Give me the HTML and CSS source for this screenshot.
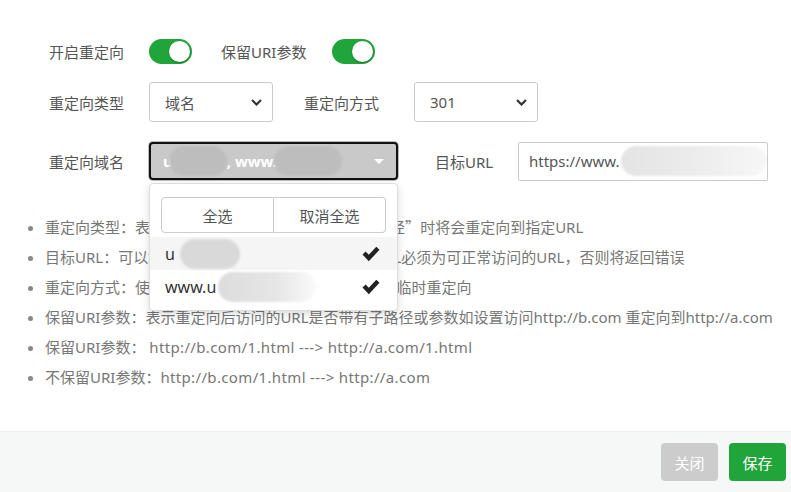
FILE: index.html
```html
<!DOCTYPE html>
<html lang="zh-CN">
<head>
  <meta charset="UTF-8" />
  <meta name="viewport" content="width=device-width, initial-scale=1.0" />
  <title>重定向</title>
  <link rel="stylesheet" href="styles.css">
</head>
<body>
  <div class="dialog">
    <div class="content">
      <div class="row">
        <span class="label">开启重定向</span>
        <span class="switch"></span>
        <span class="label label-keep">保留URI参数</span>
        <span class="switch"></span>
      </div>

      <div class="row">
        <span class="label">重定向类型</span>
        <div class="select">
          <span>域名</span>
          <svg width="11" height="7" viewBox="0 0 11 7"><polyline points="1,1 5.5,5.5 10,1" fill="none" stroke="#333" stroke-width="2.2"/></svg>
        </div>
        <span class="label label-mode">重定向方式</span>
        <div class="select">
          <span>301</span>
          <svg width="11" height="7" viewBox="0 0 11 7"><polyline points="1,1 5.5,5.5 10,1" fill="none" stroke="#333" stroke-width="2.2"/></svg>
        </div>
      </div>

      <div class="row row-domain">
        <span class="label">重定向域名</span>
        <div class="domain">
          <div class="domain-select">
            <span>u</span><span class="blot blot-a"></span><span>, www.</span><span class="blot blot-b"></span>
            <span class="caret"></span>
          </div>
          <div class="menu">
            <div class="menu-actions">
              <button>全选</button>
              <button>取消全选</button>
            </div>
            <div class="menu-item active">
              <span>u</span><span class="blot blot-c"></span>
              <svg class="check" width="18" height="16" viewBox="0 0 18 16"><path d="M0.5 8.6 L3.6 5.6 L6.8 8.8 L14.3 0.8 L17.5 3.8 L6.8 15.2 Z" fill="#222"/></svg>
            </div>
            <div class="menu-item">
              <span>www.u</span><span class="blot blot-d"></span>
              <svg class="check" width="18" height="16" viewBox="0 0 18 16"><path d="M0.5 8.6 L3.6 5.6 L6.8 8.8 L14.3 0.8 L17.5 3.8 L6.8 15.2 Z" fill="#222"/></svg>
            </div>
          </div>
        </div>
        <span class="label label-url">目标URL</span>
        <div class="input">https://www.<span class="blot blot-e"></span></div>
      </div>

      <ul class="tips">
        <li>重定向类型：表示访问选择的<span class="cjk">“</span>域名<span class="cjk">”</span>或输入的<span class="cjk">“</span>路径<span class="cjk">”</span>时将会重定向到指定URL</li>
        <li>目标URL：可以填写你需要重定向到的站点，目标URL必须为可正常访问的URL，否则将返回错误</li>
        <li>重定向方式：使用301表示永久重定向，使用302表示临时重定向</li>
        <li>保留URI参数：表示重定向后访问的URL是否带有子路径或参数如设置访问http://b.com 重定向到http://a.com</li>
        <li>保留URI参数： <span class="url">http://b.com/1.html ---&gt; http://a.com/1.html</span></li>
        <li>不保留URI参数：<span class="url">http://b.com/1.html ---&gt; http://a.com</span></li>
      </ul>
    </div>

    <div class="footer">
      <button class="btn btn-close">关闭</button>
      <button class="btn btn-save">保存</button>
    </div>
  </div>
</body>
</html>
```

FILE: styles.css
```css
body {
  margin: 0;
  font-family: "Noto Sans", "Noto Sans CJK SC", sans-serif;
  font-size: 15px;
  color: #555;
  background: #fff;
}

.dialog {
  height: 100vh;
  display: flex;
  flex-direction: column;
}

.content {
  flex: 1;
  padding: 31px 0 0 49px;
}

.row {
  display: flex;
  align-items: center;
  height: 40px;
  margin-bottom: 11px;
}

.row-domain {
  margin-top: 19px;
}

.label {
  width: 100px;
  flex-shrink: 0;
  color: #555;
}

.label-keep {
  width: 111px;
  margin-left: 29px;
}

.label-mode {
  width: 110px;
  margin-left: 31px;
}

.label-url {
  width: 83px;
  margin-left: 37px;
}

.switch {
  position: relative;
  width: 43px;
  height: 25px;
  border-radius: 13px;
  background: #20a53a;
  flex-shrink: 0;
}

.switch::after {
  content: "";
  position: absolute;
  right: 2px;
  top: 2px;
  width: 21px;
  height: 21px;
  border-radius: 50%;
  background: #fff;
  box-shadow: 0 1px 2px rgba(0,0,0,0.3);
}

.select {
  box-sizing: border-box;
  width: 124px;
  height: 40px;
  border: 1px solid #ccc;
  border-radius: 3px;
  padding: 0 10px 0 15px;
  display: flex;
  align-items: center;
  justify-content: space-between;
  color: #555;
}

.domain {
  position: relative;
  width: 249px;
  flex-shrink: 0;
}

.domain-select {
  box-sizing: border-box;
  height: 38px;
  border: 2px solid #111;
  border-radius: 4px;
  box-shadow: 0 0 0 1px #bbb;
  background: #c9c9c9;
  color: #fff;
  font-weight: bold;
  padding: 0 12px;
  display: flex;
  align-items: center;
  white-space: nowrap;
}

.caret {
  margin-left: auto;
  border-left: 5px solid transparent;
  border-right: 5px solid transparent;
  border-top: 5px solid #fff;
}

.blot {
  display: inline-block;
  height: 30px;
  border-radius: 15px;
  background: #bdbdbd;
  filter: blur(1px);
}

.blot-a {
  width: 58px;
  margin-left: -4px;
}

.blot-b {
  width: 68px;
  margin-left: -3px;
}

.blot-c {
  width: 60px;
  margin-left: 5px;
  background: #d9d9d9;
}

.blot-d {
  width: 98px;
  margin-left: 2px;
  background: linear-gradient(90deg, #dcdcdc, #e6e6e6 60%, #fafafa);
}

.blot-e {
  width: 150px;
  margin-left: 2px;
  background: linear-gradient(90deg, #e4e4e4, #ececec 50%, #f7f7f7);
}

.menu {
  position: absolute;
  top: 41px;
  left: 0;
  right: 0;
  z-index: 2;
  background: #fff;
  border: 1px solid #ddd;
  border-radius: 4px;
  box-shadow: 0 3px 8px rgba(0,0,0,0.15);
  padding-bottom: 7px;
}

.menu-actions {
  display: flex;
  height: 36px;
  margin: 13px 11px 4px;
}

.menu-actions button {
  flex: 1;
  font: inherit;
  color: #555;
  background: #fff;
  border: 1px solid #ccc;
  cursor: pointer;
}

.menu-actions button:first-child {
  border-radius: 4px 0 0 4px;
}

.menu-actions button:last-child {
  border-left: none;
  border-radius: 0 4px 4px 0;
}

.menu-item {
  height: 33px;
  display: flex;
  align-items: center;
  padding: 0 17px 0 15px;
  color: #333;
  font-size: 16px;
}

.menu-item.active {
  background: #f5f5f5;
}

.check {
  margin-left: auto;
}

.input {
  box-sizing: border-box;
  width: 250px;
  height: 39px;
  border: 1px solid #ccc;
  border-radius: 2px;
  padding-left: 10px;
  display: flex;
  align-items: center;
  color: #555;
  white-space: nowrap;
  overflow: hidden;
}

.tips {
  margin: 31px 0 0 -49px;
  padding-left: 45px;
  color: #777;
}

.tips li {
  line-height: 30px;
  white-space: nowrap;
}

.tips li::marker {
  color: #888;
}

.tips .cjk {
  font-family: "Noto Sans CJK SC", sans-serif;
}

.tips .url {
  letter-spacing: 0.35px;
}

.footer {
  height: 60px;
  border-top: 1px solid #eee;
  background: #f6f8f8;
  display: flex;
  justify-content: flex-end;
  align-items: center;
  gap: 11px;
  padding-right: 5px;
}

.btn {
  width: 57px;
  height: 38px;
  border: none;
  border-radius: 4px;
  color: #fff;
  font: inherit;
  cursor: pointer;
}

.btn-close {
  background: #ccc;
}

.btn-save {
  background: #20a53a;
}
```
